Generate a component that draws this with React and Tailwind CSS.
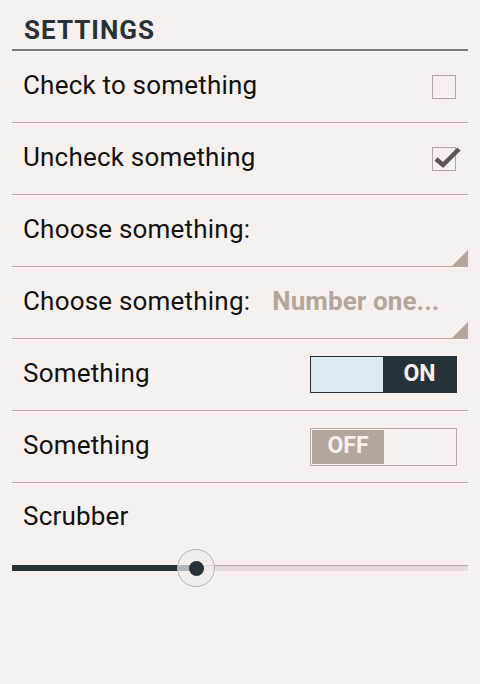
import React from "react";

const rowText = "mb-[4px] text-[26px] leading-[30px] tracking-[0.2px] text-[#111111]";

function Row({ children }) {
  return (
    <div className="relative flex h-[72px] items-center justify-between border-b border-[#b9aca3] pl-[11px] pr-[12px]">
      {children}
    </div>
  );
}

function Spinner({ label, value }) {
  return (
    <div className="relative flex h-[72px] items-center border-b border-[#b9aca3] pl-[11px] pr-[12px]">
      <span className={rowText}>{label}</span>
      {value && (
        <span className="mb-[4px] ml-[22px] text-[26px] font-bold leading-[30px] tracking-[0.1px] text-[#b3a69c]">{value}</span>
      )}
      {/* corner triangle */}
      <svg className="absolute bottom-0 right-0" width="16" height="16" viewBox="0 0 16 16">
        <polygon points="16,0 16,16 0,16" fill="#b3a69c" />
      </svg>
    </div>
  );
}

function Toggle({ on }) {
  if (on) {
    return (
      <div className="-mr-[1px] flex h-[37px] w-[147px] justify-end border border-[#263238] bg-[#dce7ee]">
        <div className="flex w-[73px] items-center justify-center bg-[#263238] text-[23px] font-bold text-[#f6f1ee]">
          ON
        </div>
      </div>
    );
  }
  return (
    <div className="-mr-[1px] flex h-[38px] w-[147px] border border-[#b9aca3] p-[1px]">
      <div className="flex w-[72px] items-center justify-center bg-[#b3a69c] text-[23px] font-bold text-[#f6f1ee]">
        OFF
      </div>
    </div>
  );
}

export default function App() {
  const value = 40.4;
  return (
    <div className="min-h-screen bg-[#f6f1ee] px-3 font-['Roboto',sans-serif]">
      {/* Header */}
      <div className="border-b-2 border-[#7b7b7b] pl-[12px] pt-[15px] pb-[4px] text-[26px] font-bold leading-[30px] tracking-[1px] text-[#263238]">
        SETTINGS
      </div>

      <Row>
        <span className={rowText}>Check to something</span>
        <div className="h-6 w-6 border border-[#b3a69c]" />
      </Row>

      <Row>
        <span className={rowText}>Uncheck something</span>
        <div className="relative h-6 w-6 border border-[#b3a69c]">
          <svg className="absolute -top-[1px] left-[1px]" width="27" height="24" viewBox="0 0 27 24">
            <path d="M2 12 L9 18 L25 2" fill="none" stroke="#5b5653" strokeWidth="4.5" strokeLinejoin="miter" />
          </svg>
        </div>
      </Row>

      <Spinner label="Choose something:" />
      <Spinner label="Choose something:" value="Number one..." />

      <Row>
        <span className={rowText}>Something</span>
        <Toggle on />
      </Row>

      <Row>
        <span className={rowText}>Something</span>
        <Toggle />
      </Row>

      {/* Scrubber */}
      <div className="pl-[11px] pt-[18px]">
        <span className="text-[26px] leading-[30px] tracking-[0.2px] text-[#111111]">Scrubber</span>
      </div>
      <div className="relative mt-[16px] flex h-[40px] items-center">
        <div className="flex h-[6px] w-full">
          <div className="h-full bg-[#263238]" style={{ width: `${value}%` }} />
          <div className="h-full flex-1 border-t border-[#b9aca3] bg-[#e4ddd8]" />
        </div>
        <div
          className="absolute top-[1px] flex h-[38px] w-[38px] -translate-x-1/2 items-center justify-center rounded-full border border-[#bdb0a7] bg-[#f1ece9]/70"
          style={{ left: `${value}%` }}
        >
          <div className="h-[15px] w-[15px] rounded-full bg-[#263238]" />
        </div>
      </div>
    </div>
  );
}
